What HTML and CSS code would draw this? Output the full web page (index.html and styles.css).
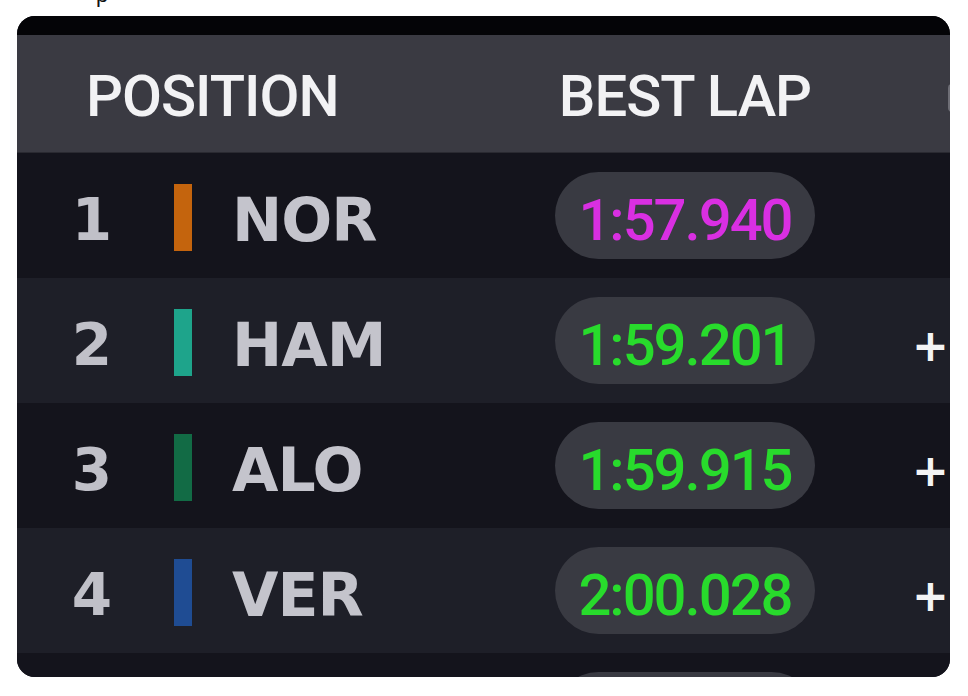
FILE: index.html
```
<html>
	<head>
		<meta charset="UTF-8" />
		<meta name="viewport" content="width=device-width, initial-scale=1.0" />
		<title>Best Lap</title>
		<link rel="stylesheet" href="styles.css">
	</head>
	<body>
		<div class="caption"><span>p</span></div>
		<div class="board">
			<div class="strip"></div>
			<div class="head">
				<div class="head-pos">POSITION</div>
				<div class="head-lap">BEST LAP</div>
				<div class="head-gap"></div>
			</div>
			<div class="row odd">
				<div class="pos">1</div>
				<div class="bar mcl"></div>
				<div class="name">NOR</div>
				<div class="pill purple">1:57.940</div>
				<div class="gap"></div>
			</div>
			<div class="row even">
				<div class="pos">2</div>
				<div class="bar mer"></div>
				<div class="name">HAM</div>
				<div class="pill">1:59.201</div>
				<div class="gap">+</div>
			</div>
			<div class="row odd">
				<div class="pos">3</div>
				<div class="bar amr"></div>
				<div class="name">ALO</div>
				<div class="pill">1:59.915</div>
				<div class="gap">+</div>
			</div>
			<div class="row even">
				<div class="pos">4</div>
				<div class="bar rbr"></div>
				<div class="name">VER</div>
				<div class="pill">2:00.028</div>
				<div class="gap">+</div>
			</div>
			<div class="row odd">
				<div class="pos"></div>
				<div class="bar"></div>
				<div class="name"></div>
				<div class="pill"></div>
				<div class="gap"></div>
			</div>
		</div>
	</body>
</html>
```

FILE: styles.css
```
body {
	margin: 0;
	background: #ffffff;
}
.caption {
	height: 16px;
	overflow: hidden;
	padding-left: 96px;
	font: 22px / 1 "Liberation Sans", sans-serif;
	color: #111;
}
.caption span {
	display: block;
	margin-top: -16px;
}
.board {
	margin-left: 17px;
	width: 933px;
	height: 661px;
	border-radius: 18px;
	overflow: hidden;
	background: #13131b;
}
.strip {
	height: 19px;
	background: #040407;
}
.head {
	height: 118px;
	display: flex;
	align-items: center;
	background: #3a3a42;
	border-bottom: 1px solid #2a2a31;
	box-sizing: border-box;
	font: 500 58px / 1 Roboto, sans-serif;
	letter-spacing: -1px;
	color: #f2f2f4;
	white-space: nowrap;
}
.head > div,
.row > div {
	flex-shrink: 0;
}
.head-pos {
	padding-left: 69px;
	width: 469px;
	padding-top: 4px;
}
.head-lap {
	width: 260px;
	text-align: center;
	padding-top: 4px;
}
.head-gap {
	margin-left: 133px;
	width: 4px;
	height: 28px;
	margin-top: 8px;
	border-radius: 4px 0 0 4px;
	border-left: 2px solid #6e6e76;
	box-sizing: border-box;
}
.row {
	height: 125px;
	display: flex;
	align-items: center;
	padding-left: 45px;
	white-space: nowrap;
}
.odd {
	background: #14141c;
}
.even {
	background: #1e1f28;
}
.pos {
	width: 60px;
	text-align: center;
	font: bold 58px / 1 "DejaVu Sans", sans-serif;
	color: #c0c0c8;
	padding-top: 8px;
}
.bar {
	margin-left: 52px;
	width: 18px;
	height: 67px;
	margin-top: 4px;
}
.mcl { background: #c4640d; }
.mer { background: #1ea48b; }
.amr { background: #126b45; }
.rbr { background: #1f4c93; }
.name {
	margin-left: 40px;
	width: 323px;
	font: bold 60px / 1 "DejaVu Sans", sans-serif;
	letter-spacing: -1px;
	color: #c4c4cc;
	padding-top: 8px;
}
.pill {
	width: 260px;
	height: 87px;
	border-radius: 44px;
	background: #393a42;
	display: flex;
	align-items: center;
	justify-content: center;
	font: 500 58px / 1 Roboto, sans-serif;
	letter-spacing: -2px;
	color: #28db2c;
	padding-top: 8px;
	box-sizing: border-box;
}
.purple {
	color: #d92fe2;
}
.gap {
	margin-left: 97px;
	font: bold 44px / 1 "DejaVu Sans", sans-serif;
	color: #f4f4f4;
	padding-top: 10px;
}
```
